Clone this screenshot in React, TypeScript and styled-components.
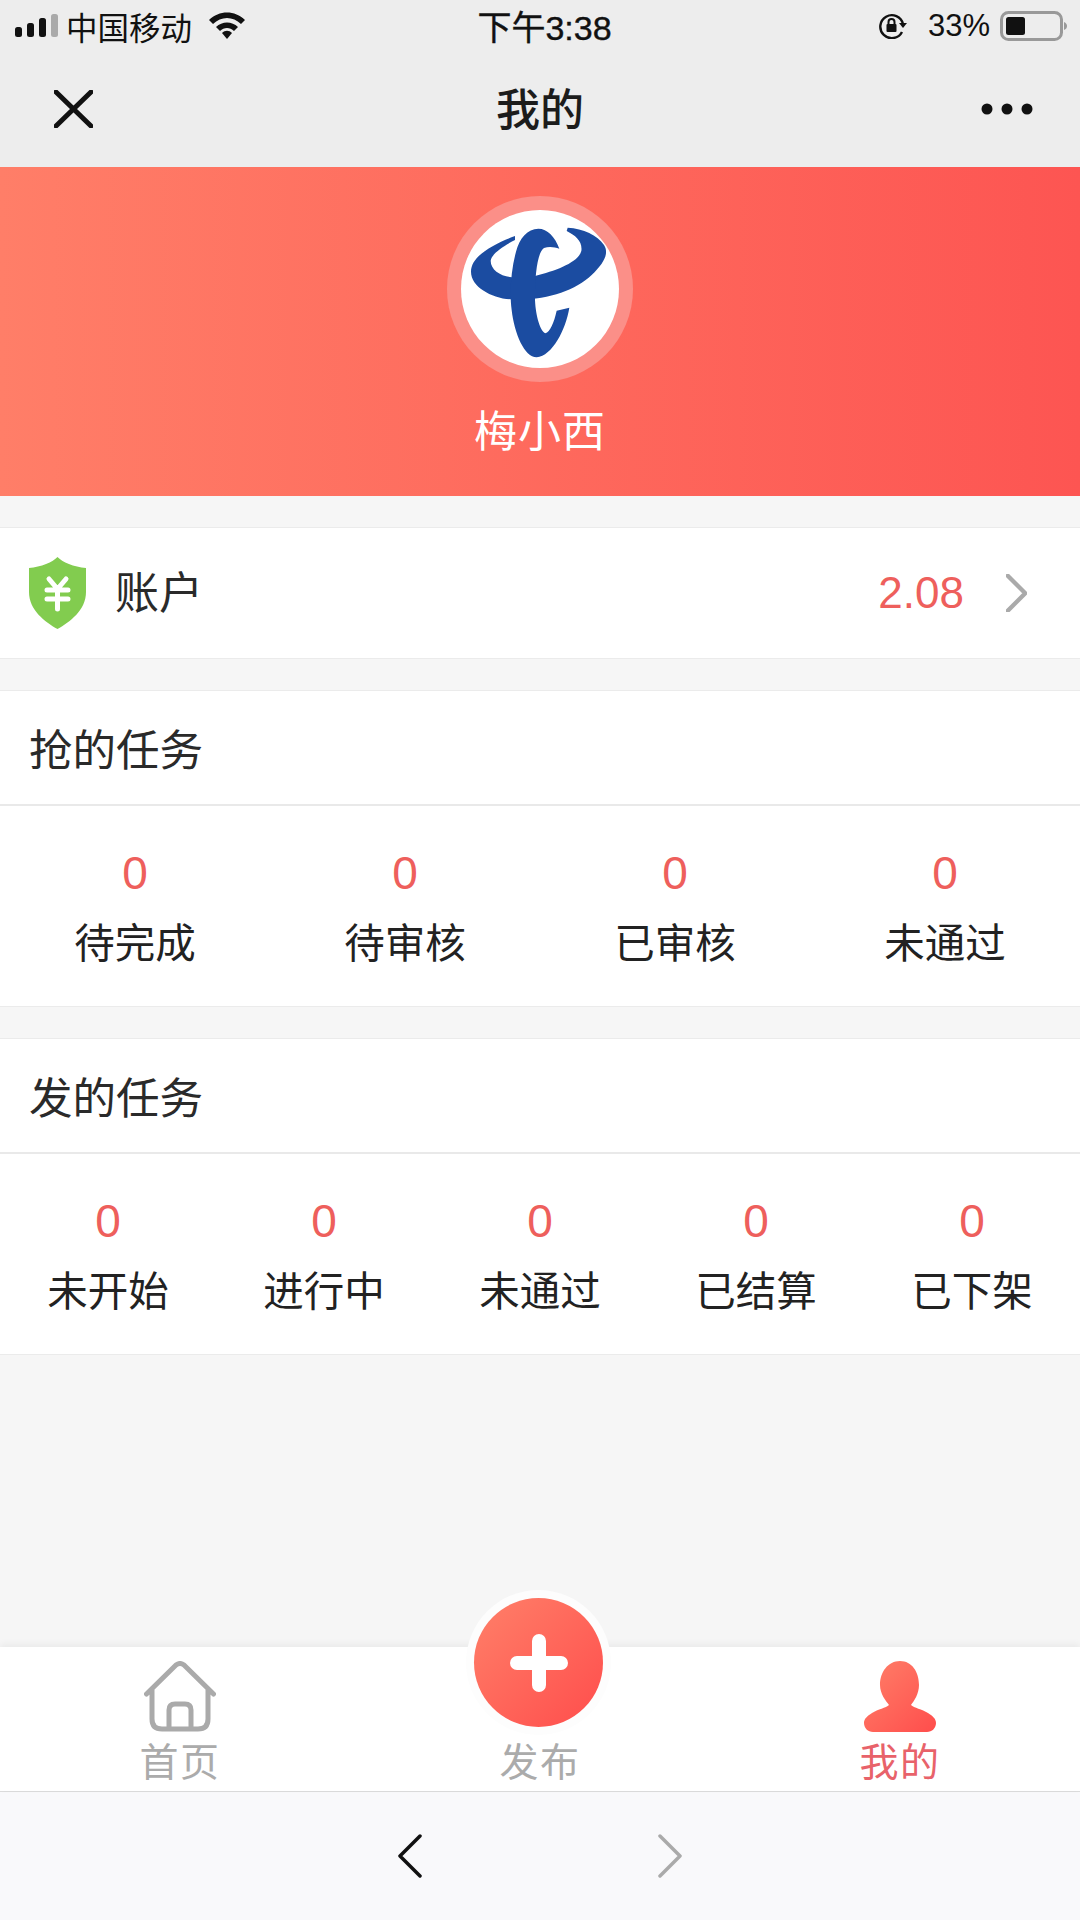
import React from 'react';
import styled, { createGlobalStyle } from 'styled-components';

const RED = '#ee5f5c';
const FONT = '"Liberation Sans", "Noto Sans CJK SC", sans-serif';

const GlobalStyle = createGlobalStyle`
  html, body {
    margin: 0;
    padding: 0;
    background: #f6f6f6;
    font-family: ${FONT};
  }
`;

const Page = styled.div`
  width: 1080px;
  height: 1920px;
  display: flex;
  flex-direction: column;
  overflow: hidden;
  background: #f6f6f6;
`;

const Header = styled.div`
  height: 167px;
  background: #ededed;
  flex-shrink: 0;
`;

const StatusBar = styled.div`
  height: 51px;
  padding: 0 13px 0 15px;
  display: grid;
  grid-template-columns: 1fr auto 1fr;
  align-items: center;
  color: #111;
  font-size: 31.5px;
`;

const StatusGroup = styled.div<{ $end?: boolean }>`
  display: flex;
  align-items: center;
  justify-content: ${(p) => (p.$end ? 'flex-end' : 'flex-start')};
`;

const Carrier = styled.span`
  margin: 0 17px 0 8px;
  white-space: nowrap;
`;

const Clock = styled.span`
  padding-left: 7px;
  font-size: 34px;
  white-space: nowrap;
  -webkit-text-stroke: 0.4px #111;
`;

const Percent = styled.span`
  margin: 0 10px 0 20px;
  font-size: 31px;
`;

const NavBar = styled.div`
  height: 116px;
  display: grid;
  grid-template-columns: 1fr auto 1fr;
  align-items: center;
  padding: 0 47px;
`;

const NavTitle = styled.div`
  margin-top: -4px;
  font-size: 44px;
  font-weight: 500;
  color: #1c1c1c;
`;

const NavAction = styled.div<{ $end?: boolean }>`
  display: flex;
  justify-content: ${(p) => (p.$end ? 'flex-end' : 'flex-start')};
  padding-left: ${(p) => (p.$end ? '0' : '7px')};
`;

const Banner = styled.div`
  height: 329px;
  flex-shrink: 0;
  display: flex;
  flex-direction: column;
  align-items: center;
  padding-top: 29px;
  box-sizing: border-box;
  background: linear-gradient(90deg, #ff7e68 0%, #fd5552 100%);
`;

const AvatarRing = styled.div`
  width: 186px;
  height: 186px;
  border-radius: 50%;
  background: #fb8f88;
  display: flex;
  align-items: center;
  justify-content: center;
`;

const Avatar = styled.div`
  width: 158px;
  height: 158px;
  border-radius: 50%;
  background: #fff;
  overflow: hidden;
`;

const UserName = styled.div`
  margin-top: 20px;
  font-size: 43px;
  line-height: 60px;
  letter-spacing: 1px;
  color: #fff;
`;

const Card = styled.div`
  margin-top: 31px;
  background: #fff;
  border-top: 1px solid #ebebeb;
  border-bottom: 1px solid #ebebeb;
`;

const AccountRow = styled.div`
  height: 130px;
  display: flex;
  align-items: center;
  padding: 0 53px 0 29px;
`;

const AccountLabel = styled.div`
  margin-left: 29px;
  margin-top: -6px;
  font-size: 44px;
  color: #2a2a2a;
  flex: 1;
`;

const AccountAmount = styled.div`
  font-size: 44px;
  color: ${RED};
  margin-right: 42px;
`;

const SectionTitle = styled.div`
  height: 115px;
  padding-left: 29px;
  box-sizing: border-box;
  display: flex;
  align-items: center;
  font-size: 43.5px;
  color: #2a2a2a;
  border-bottom: 2px solid #e9e9e9;
`;

const StatsRow = styled.div<{ $columns: number }>`
  height: 200px;
  display: grid;
  grid-template-columns: repeat(${(p) => p.$columns}, 1fr);
  padding-top: 37px;
  box-sizing: border-box;
`;

const Stat = styled.div`
  display: flex;
  flex-direction: column;
  align-items: center;
`;

const StatValue = styled.div`
  font-size: 46px;
  line-height: 60px;
  color: ${RED};
`;

const StatLabel = styled.div`
  margin-top: 12px;
  font-size: 40.5px;
  line-height: 58px;
  color: #222;
`;

const Spacer = styled.div`
  flex: 1;
`;

const TabBar = styled.div`
  position: relative;
  height: 144px;
  flex-shrink: 0;
  display: grid;
  grid-template-columns: repeat(3, 1fr);
  background: #fff;
  box-shadow: 0 -3px 7px rgba(0, 0, 0, 0.05);
`;

const Tab = styled.div`
  display: flex;
  flex-direction: column;
  align-items: center;
  justify-content: flex-end;
  padding-bottom: 6px;
`;

const TabLabel = styled.div<{ $active?: boolean }>`
  margin-top: 9px;
  font-size: 39px;
  line-height: 44px;
  letter-spacing: 1.5px;
  color: ${(p) => (p.$active ? '#e8626a' : '#ababab')};
`;

const Fab = styled.div`
  position: absolute;
  left: 474px;
  top: -49px;
  width: 129px;
  height: 129px;
  border-radius: 50%;
  background: linear-gradient(135deg, #ff8069 0%, #ff4d4c 100%);
  box-shadow: 0 0 0 8px #fdfdfd;
  display: flex;
  align-items: center;
  justify-content: center;
`;

const BrowserBar = styled.div`
  height: 129px;
  flex-shrink: 0;
  display: flex;
  align-items: center;
  justify-content: center;
  gap: 236px;
  background: #f9f9fb;
  border-top: 1px solid #dcdcdc;
  box-sizing: border-box;
`;

const SignalIcon = () => (
  <svg width="43" height="23" viewBox="0 0 43 23">
    <rect x="0" y="13" width="7" height="10" rx="2.5" fill="#111" />
    <rect x="12" y="9" width="7" height="14" rx="2.5" fill="#111" />
    <rect x="24" y="4" width="7" height="19" rx="2.5" fill="#111" />
    <rect x="36" y="0" width="7" height="23" rx="2.5" fill="#aaa" />
  </svg>
);

const WifiIcon = () => (
  <svg width="36" height="27" viewBox="0 0 36 27">
    <path d="M0 8 C10 -2 26 -2 36 8 L32 12 C24 4 12 4 4 12 Z" fill="#111" />
    <path d="M7 15 C13 9 23 9 29 15 L25 19 C21 15 15 15 11 19 Z" fill="#111" />
    <path d="M13 21 C16 18 20 18 23 21 L18 27 Z" fill="#111" />
  </svg>
);

const RotationLockIcon = () => (
  <svg width="30" height="26" viewBox="0 0 30 26">
    <path
      d="M24 19 A11.5 11.5 0 1 1 25 11"
      fill="none"
      stroke="#111"
      strokeWidth="2.4"
    />
    <path d="M21 10 L29 10 L25 15 Z" fill="#111" />
    <rect x="8.5" y="11" width="10" height="8" rx="1" fill="#111" />
    <path d="M10.5 11 V9 a3 3 0 0 1 6 0 V11" fill="none" stroke="#111" strokeWidth="2" />
  </svg>
);

const BatteryIcon = () => (
  <svg width="67" height="30" viewBox="0 0 67 30">
    <rect x="1.5" y="1.5" width="60" height="27" rx="7" fill="none" stroke="#999" strokeWidth="3" />
    <rect x="6" y="6" width="19" height="18" rx="2.5" fill="#111" />
    <path d="M64 11 C66 12 67 13 67 15 C67 17 66 18 64 19 Z" fill="#999" />
  </svg>
);

const CloseIcon = () => (
  <svg width="39" height="38" viewBox="0 0 39 38">
    <path d="M2 2 L37 36 M37 2 L2 36" stroke="#111" strokeWidth="5" strokeLinecap="round" />
  </svg>
);

const MoreIcon = () => (
  <svg width="52" height="12" viewBox="0 0 52 12">
    <circle cx="6" cy="6" r="5.5" fill="#111" />
    <circle cx="26" cy="6" r="5.5" fill="#111" />
    <circle cx="46" cy="6" r="5.5" fill="#111" />
  </svg>
);

const TelecomLogo = () => (
  <svg width="158" height="158" viewBox="183 120 474 474">
    <path
      fill="#1b4ca1"
      d="M345 198 C280 222 213 258 213 305 C213 352 280 388 340 388 C440 392 525 362 575 315 C612 280 628 250 612 225 C592 195 550 176 503 173 L500 183 C528 197 548 215 544 243 C536 276 470 302 405 318 L335 322 C302 318 272 300 272 272 C276 250 310 228 345 210 Z"
    />
    <path
      fill="#1b4ca1"
      d="M478 236 C465 200 442 176 415 176 C383 176 358 205 348 245 C333 300 328 370 335 420 C343 490 373 562 410 562 C457 557 497 480 508 413 L470 422 C462 458 450 486 436 490 C422 485 407 440 405 390 C404 320 412 246 432 234 C447 228 464 231 478 236 Z"
    />
  </svg>
);

const ShieldIcon = () => (
  <svg width="57" height="72" viewBox="0 0 57 72">
    <path
      d="M28.5 0 C33 5 45 10 57 11 L57 35 C57 53 41 65 28.5 72 C16 65 0 53 0 35 L0 11 C12 10 24 5 28.5 0 Z"
      fill="#82cc4f"
    />
    <path
      d="M20 22 L28.5 32 L37 22 M18 33 H39 M18 42 H39 M28.5 32 V52"
      fill="none"
      stroke="#fff"
      strokeWidth="5"
      strokeLinecap="round"
      strokeLinejoin="round"
    />
  </svg>
);

const ChevronIcon = ({ left, color, width, size }: { left?: boolean; color: string; width: number; size: number }) => (
  <svg width={size} height={(size * 44) / 24} viewBox="0 0 24 44">
    <path
      d={left ? 'M22 2 L2 22 L22 42' : 'M2 2 L22 22 L2 42'}
      fill="none"
      stroke={color}
      strokeWidth={width}
      strokeLinecap="round"
      strokeLinejoin="round"
    />
  </svg>
);

const HomeIcon = () => (
  <svg width="72" height="71" viewBox="0 0 72 71">
    <path
      d="M2.5 33 L32 4 Q36 1 40 4 L69.5 33 M8 29 V58 Q8 68 18 68 H54 Q64 68 64 58 V29 M25 68 V49 Q25 43 31 43 H41 Q47 43 47 49 V68"
      fill="none"
      stroke="#aaa"
      strokeWidth="5"
      strokeLinecap="round"
      strokeLinejoin="round"
    />
  </svg>
);

const PersonIcon = () => (
  <svg width="72" height="71" viewBox="0 0 72 71">
    <defs>
      <linearGradient id="personFill" x1="0" y1="0" x2="1" y2="1">
        <stop offset="0" stopColor="#ff8069" />
        <stop offset="1" stopColor="#ff4d4c" />
      </linearGradient>
    </defs>
    <path
      fill="url(#personFill)"
      d="M36 0 C48 0 55 11 55 24 C55 33 50 40 47 44 C50 47 58 48 64 52 C69 55 72 58 72 62 C72 67 68 71 63 71 H9 C4 71 0 67 0 62 C0 58 3 55 8 52 C14 48 22 47 25 44 C22 40 16 33 16 24 C16 11 24 0 36 0 Z"
    />
  </svg>
);

const PlusIcon = () => (
  <svg width="58" height="58" viewBox="0 0 58 58">
    <path d="M29 7 V51 M7 29 H51" stroke="#fff" strokeWidth="14" strokeLinecap="round" />
  </svg>
);

const GRAB_STATS = ['待完成', '待审核', '已审核', '未通过'];
const PUBLISH_STATS = ['未开始', '进行中', '未通过', '已结算', '已下架'];

const TaskSection = ({ title, labels }: { title: string; labels: string[] }) => (
  <Card>
    <SectionTitle>{title}</SectionTitle>
    <StatsRow $columns={labels.length}>
      {labels.map((label) => (
        <Stat key={label}>
          <StatValue>0</StatValue>
          <StatLabel>{label}</StatLabel>
        </Stat>
      ))}
    </StatsRow>
  </Card>
);

const App = () => (
  <Page>
    <GlobalStyle />
    <Header>
      <StatusBar>
        <StatusGroup>
          <SignalIcon />
          <Carrier>中国移动</Carrier>
          <WifiIcon />
        </StatusGroup>
        <Clock>下午3:38</Clock>
        <StatusGroup $end>
          <RotationLockIcon />
          <Percent>33%</Percent>
          <BatteryIcon />
        </StatusGroup>
      </StatusBar>
      <NavBar>
        <NavAction>
          <CloseIcon />
        </NavAction>
        <NavTitle>我的</NavTitle>
        <NavAction $end>
          <MoreIcon />
        </NavAction>
      </NavBar>
    </Header>
    <Banner>
      <AvatarRing>
        <Avatar>
          <TelecomLogo />
        </Avatar>
      </AvatarRing>
      <UserName>梅小西</UserName>
    </Banner>
    <Card>
      <AccountRow>
        <ShieldIcon />
        <AccountLabel>账户</AccountLabel>
        <AccountAmount>2.08</AccountAmount>
        <ChevronIcon color="#aaa" width={5} size={21} />
      </AccountRow>
    </Card>
    <TaskSection title="抢的任务" labels={GRAB_STATS} />
    <TaskSection title="发的任务" labels={PUBLISH_STATS} />
    <Spacer />
    <TabBar>
      <Tab>
        <HomeIcon />
        <TabLabel>首页</TabLabel>
      </Tab>
      <Tab>
        <TabLabel>发布</TabLabel>
      </Tab>
      <Tab>
        <PersonIcon />
        <TabLabel $active>我的</TabLabel>
      </Tab>
      <Fab>
        <PlusIcon />
      </Fab>
    </TabBar>
    <BrowserBar>
      <ChevronIcon left color="#111" width={3.5} size={24} />
      <ChevronIcon color="#aaa" width={3.5} size={24} />
    </BrowserBar>
  </Page>
);

export default App;
